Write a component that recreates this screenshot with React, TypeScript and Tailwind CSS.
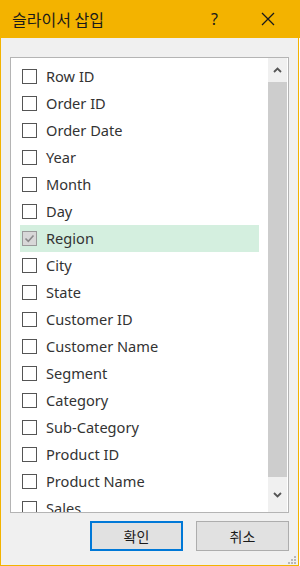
import React from 'react';

const FIELDS = [
  'Row ID',
  'Order ID',
  'Order Date',
  'Year',
  'Month',
  'Day',
  'Region',
  'City',
  'State',
  'Customer ID',
  'Customer Name',
  'Segment',
  'Category',
  'Sub-Category',
  'Product ID',
  'Product Name',
  'Sales',
];

function FieldRow({ label, checked }: { label: string; checked: boolean }) {
  return (
    <div
      className={`mx-[9px] flex h-[27px] shrink-0 items-center pl-[2px] ${checked ? 'bg-[#d4efdf]' : ''}`}
    >
      <span
        className={`flex h-[15px] w-[15px] items-center justify-center border ${
          checked ? 'border-[#9a9a9a] bg-[#d8d8d8]' : 'border-[#555] bg-white'
        }`}
      >
        {checked && (
          <svg width="11" height="11" viewBox="0 0 11 11">
            <path d="M1.5 5.5 L4.3 8.3 L9.5 2.5" fill="none" stroke="#8a8a8a" strokeWidth="1.6" />
          </svg>
        )}
      </span>
      <span className="ml-[9px] text-[14.6px] leading-none text-[#333]">{label}</span>
    </div>
  );
}

export default function App() {
  return (
    <div
      className="flex h-[566px] w-[300px] flex-col bg-white"
      style={{ fontFamily: '"Noto Sans", "Noto Sans CJK KR", sans-serif' }}
    >
      <div className="flex h-[38px] shrink-0 items-center bg-[#f3b300] pl-[12px]">
        <span className="text-[16px] text-[#1a1a1a]" style={{ fontFamily: '"Noto Sans CJK KR", sans-serif' }}>
          슬라이서 삽입
        </span>
        <span className="ml-auto mr-[43px] text-[16px] text-[#1a1a1a]">?</span>
        <svg width="14" height="14" viewBox="0 0 14 14" className="mr-[25px]">
          <path d="M1 1 L13 13 M13 1 L1 13" stroke="#1a1a1a" strokeWidth="1.3" />
        </svg>
      </div>
      <div className="mr-[1px] flex min-h-0 flex-1 flex-col border-x border-b border-[#f3b300] bg-[#f0f0f0]">
        <div className="mx-[9px] mt-[19px] flex h-[456px] border border-[#b4b4b4] bg-white">
          <div className="flex min-w-0 flex-1 flex-col overflow-hidden pt-[5px]">
            {FIELDS.map((f) => (
              <FieldRow key={f} label={f} checked={f === 'Region'} />
            ))}
          </div>
          <div className="mr-[1px] flex w-[19px] shrink-0 flex-col bg-[#f0f0f0]">
            <div className="flex h-[24px] items-center justify-center">
              <svg width="9" height="6" viewBox="0 0 9 6">
                <path d="M1 5 L4.5 1.5 L8 5" fill="none" stroke="#555" strokeWidth="1.8" />
              </svg>
            </div>
            <div className="flex-1 bg-[#cdcdcd]" />
            <div className="flex h-[35px] items-center justify-center">
              <svg width="9" height="6" viewBox="0 0 9 6">
                <path d="M1 1 L4.5 4.5 L8 1" fill="none" stroke="#555" strokeWidth="1.8" />
              </svg>
            </div>
          </div>
        </div>
        <div className="mr-[9px] mt-[8px] flex justify-end gap-[13px]">
          <button
            type="button"
            className="h-[30px] w-[93px] border-2 border-[#0078d7] bg-[#e1e1e1] text-[14px] text-[#1a1a1a]"
            style={{ fontFamily: '"Noto Sans CJK KR", sans-serif' }}
          >
            확인
          </button>
          <button
            type="button"
            className="h-[30px] w-[93px] border border-[#adadad] bg-[#e1e1e1] text-[14px] text-[#1a1a1a]"
            style={{ fontFamily: '"Noto Sans CJK KR", sans-serif' }}
          >
            취소
          </button>
        </div>
        <div className="mt-auto flex justify-end pb-[1px] pr-[2px]">
          <svg width="10" height="10" viewBox="0 0 10 10">
            {[
              [8, 0],
              [8, 3],
              [5, 3],
              [8, 6],
              [5, 6],
              [2, 6],
            ].map(([x, y]) => (
              <rect key={`${x}-${y}`} x={x} y={y + 2} width="2" height="2" fill="#b8b8b8" />
            ))}
          </svg>
        </div>
      </div>
    </div>
  );
}
